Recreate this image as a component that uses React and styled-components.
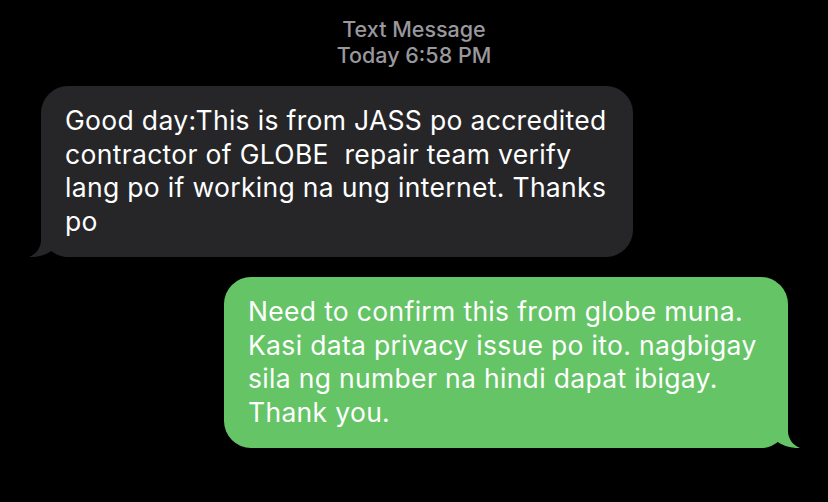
import React from "react";
import styled, { createGlobalStyle } from "styled-components";

const GlobalStyle = createGlobalStyle`
  html, body {
    margin: 0;
    padding: 0;
    background: #000;
  }
  body {
    font-family: Inter, "Liberation Sans", sans-serif;
    -webkit-font-smoothing: antialiased;
  }
`;

const Screen = styled.div`
  width: 828px;
  height: 502px;
  background: #000;
  display: flex;
  flex-direction: column;
  overflow: hidden;
`;

const Header = styled.div`
  padding-top: 16px;
  text-align: center;
  color: #98989d;
  font-size: 21.5px;
  line-height: 26px;
  font-weight: 500;
`;

const Thread = styled.div`
  display: flex;
  flex-direction: column;
  gap: 20px;
  padding: 18px 40px 0 41px;
`;

const Row = styled.div`
  display: flex;
  justify-content: ${(p) => (p.$outgoing ? "flex-end" : "flex-start")};
`;

const Bubble = styled.div`
  position: relative;
  width: ${(p) => p.$width}px;
  box-sizing: border-box;
  padding: 18px 24px 19px;
  border-radius: 27px;
  background: ${(p) => (p.$outgoing ? "#65c466" : "#262628")};
  color: #fff;
  font-size: 26.5px;
  line-height: 33.5px;
  letter-spacing: 0.32px;
  white-space: pre;
`;

const Line = styled.span`
  position: relative;
  display: block;
`;

const TailSvg = styled.svg`
  position: absolute;
  bottom: 0;
  ${(p) => (p.$outgoing ? "right: -13px;" : "left: -13px;")}
  transform: ${(p) => (p.$outgoing ? "scaleX(-1)" : "none")};
`;

function Tail({ outgoing, color }) {
  return (
    <TailSvg $outgoing={outgoing} width="46" height="36" viewBox="0 0 46 36">
      <path
        d="M13 0 V19 C13 27 8 33 1 36 C9 36.5 18 34 25 29 C29 32 33 34.5 38 36 H46 V0 Z"
        fill={color}
      />
    </TailSvg>
  );
}

const incoming = [
  "Good day:This is from JASS po accredited",
  "contractor of GLOBE  repair team verify",
  "lang po if working na ung internet. Thanks",
  "po",
];

const outgoing = [
  "Need to confirm this from globe muna.",
  "Kasi data privacy issue po ito. nagbigay",
  "sila ng number na hindi dapat ibigay.",
  "Thank you.",
];

export default function App() {
  return (
    <Screen>
      <GlobalStyle />
      <Header>
        <div>Text Message</div>
        <div>Today 6:58 PM</div>
      </Header>
      <Thread>
        <Row>
          <Bubble $width={592}>
            <Tail color="#262628" />
            {incoming.map((l, i) => (
              <Line key={i}>{l}</Line>
            ))}
          </Bubble>
        </Row>
        <Row $outgoing>
          <Bubble $outgoing $width={564}>
            <Tail outgoing color="#65c466" />
            {outgoing.map((l, i) => (
              <Line key={i}>{l}</Line>
            ))}
          </Bubble>
        </Row>
      </Thread>
    </Screen>
  );
}
